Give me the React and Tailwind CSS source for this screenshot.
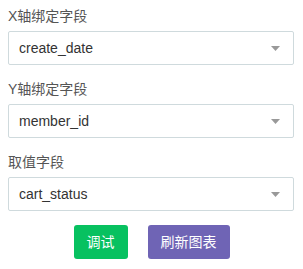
export default function App() {
  const fields = [
    { label: "X轴绑定字段", value: "create_date" },
    { label: "Y轴绑定字段", value: "member_id" },
    { label: "取值字段", value: "cart_status" },
  ];
  return (
    <div
      className="w-[303px] h-[269px] bg-white px-[8px] pt-[6px]"
      style={{ fontFamily: '"Liberation Sans", "Noto Sans CJK SC", sans-serif' }}
    >
      {fields.map((f) => (
        <div key={f.label} className="mb-[14px]">
          <div className="h-[20px] leading-[20px] text-[14px] text-[#555] mb-[5px]">{f.label}</div>
          <div className="relative h-[34px] w-[286px] border border-[#cfdadd] rounded-[2px] flex items-center pl-[10px]">
            <span className="text-[14px] text-[#333]">{f.value}</span>
            <svg className="absolute right-[13px] top-[14px]" width="9" height="5" viewBox="0 0 9 5">
              <path d="M0 0 L9 0 L4.5 5 Z" fill="#999" />
            </svg>
          </div>
        </div>
      ))}
      <div className="flex justify-center gap-[20px] mt-px">
        <button className="w-[54px] h-[34px] rounded-[3px] bg-[#07c160] text-white text-[14px]">调试</button>
        <button className="w-[82px] h-[34px] rounded-[3px] bg-[#6f64b5] text-white text-[14px]">刷新图表</button>
      </div>
    </div>
  );
}
